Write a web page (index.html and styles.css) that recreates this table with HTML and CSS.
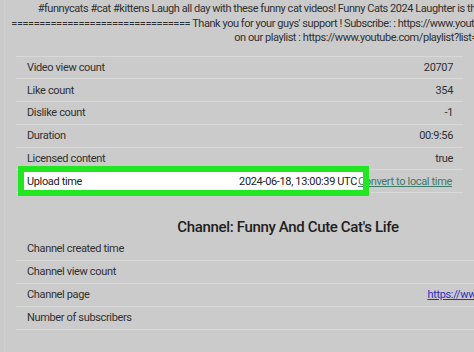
FILE: index.html
```html
<!DOCTYPE html>
<html lang="en">
<head>
  <meta charset="UTF-8">
  <meta name="viewport" content="width=device-width, initial-scale=1.0">
  <title>Video details</title>
  <link rel="stylesheet" href="styles.css">
</head>
<body>
  <div class="page">
    <p class="desc">
      #funnycats #cat #kittens Laugh all day with these funny cat videos! Funny Cats 2024 Laughter is the best medicine. Enjoy these clip<br>
      ================================ Thank you for your guys' support ! Subscribe: : https://www.youtube.com/channel/UCx7 Watch it<br>
      on our playlist : https://www.youtube.com/playlist?list=PLx9kQm2Zt7vYc3nHd8Rw1aB
    </p>

    <div class="info">
      <div class="row"><span>Video view count</span><span>20707</span></div>
      <div class="row"><span>Like count</span><span>354</span></div>
      <div class="row"><span>Dislike count</span><span>-1</span></div>
      <div class="row"><span>Duration</span><span>00:9:56</span></div>
      <div class="row"><span>Licensed content</span><span>true</span></div>
      <div class="row row-upload">
        <div class="hl">
          <span>Upload time</span>
          <span>2024-06-18, 13:00:39 UTC</span>
        </div>
        <a class="local-time" href="#">Convert to local time</a>
      </div>
    </div>

    <section class="channel">
      <h2>Channel: Funny And Cute Cat's Life</h2>
      <div class="row"><span>Channel created time</span><span></span></div>
      <div class="row"><span>Channel view count</span><span></span></div>
      <div class="row"><span>Channel page</span><a class="ext" href="#">https://www.youtube.com/</a></div>
      <div class="row"><span>Number of subscribers</span><span></span></div>
    </section>
  </div>
</body>
</html>
```

FILE: styles.css
```css
:root {
  --bg: #cbcbcb;
  --line: #d9d9d9;
  --text: #303030;
  --green: #22e622;
}

* {
  margin: 0;
  padding: 0;
  box-sizing: border-box;
}

body {
  font-family: Roboto, 'Liberation Sans', Arial, sans-serif;
  background-color: var(--bg);
  color: var(--text);
  overflow: hidden;
  height: 352px;
}

.page {
  margin-left: 4px;
  border-left: 1px solid #d1d1d1;
  height: 352px;
}

.desc {
  width: 615px;
  padding: 2px 0 10px;
  text-align: right;
  white-space: nowrap;
  font-size: 11px;
  line-height: 14.5px;
  letter-spacing: -0.45px;
}

.info {
  width: 447px;
  margin-left: 11px;
  border-top: 1px solid var(--line);
}

.row {
  display: flex;
  justify-content: space-between;
  align-items: center;
  height: 22.8px;
  padding: 0 10px 0 11px;
  border-bottom: 1px solid var(--line);
  font-size: 11px;
  letter-spacing: -0.35px;
}

/* highlighted row, frame drawn above the text */
.row-upload {
  justify-content: flex-start;
}

.hl {
  position: relative;
  display: flex;
  justify-content: space-between;
  align-items: center;
  align-self: stretch;
  width: 339px;
  margin: 2px 0 2px -3px;
  padding: 0 6px 0 3px;
  background-color: #fff;
  color: #222;
}

.hl::after {
  content: "";
  position: absolute;
  inset: -6px;
  border: 6px solid var(--green);
  z-index: 2;
  pointer-events: none;
}

.local-time {
  position: relative;
  z-index: 1;
  margin-left: -5px;
  color: #3f7a69;
  text-decoration: underline;
}

.channel {
  width: 544px;
  margin-left: 11px;
}

.channel h2 {
  text-align: center;
  font-size: 15px;
  font-weight: 500;
  letter-spacing: -0.35px;
  line-height: 18px;
  margin: 25px 0 1.5px;
  color: #1e1e1e;
}

.channel .row {
  height: 23px;
}

.ext {
  color: #2d2dc4;
  text-decoration: underline;
}
```
